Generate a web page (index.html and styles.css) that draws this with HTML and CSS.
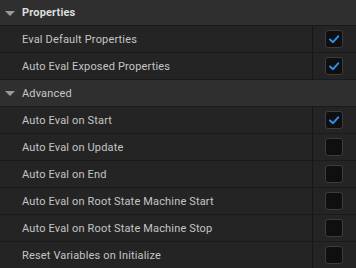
FILE: index.html
```html
<!DOCTYPE html>
<html>
<head>
<meta charset="utf-8">
<link rel="stylesheet" href="styles.css">
</head>
<body>
<div class="panel">
  <div class="header first">
    <span class="arrow"></span>
    <span class="htext">Properties</span>
  </div>
  <div class="row">
    <div class="label">Eval Default Properties</div>
    <div class="value"><span class="cb on"><svg viewBox="0 0 18 18" width="18" height="18"><path d="M5 9.5 L8 12.2 L13.2 6.3" fill="none" stroke="#2b8fec" stroke-width="2" stroke-linecap="round" stroke-linejoin="round"/></svg></span></div>
  </div>
  <div class="row">
    <div class="label">Auto Eval Exposed Properties</div>
    <div class="value"><span class="cb on"><svg viewBox="0 0 18 18" width="18" height="18"><path d="M5 9.5 L8 12.2 L13.2 6.3" fill="none" stroke="#2b8fec" stroke-width="2" stroke-linecap="round" stroke-linejoin="round"/></svg></span></div>
  </div>
  <div class="header">
    <span class="arrow"></span>
    <span class="htext light">Advanced</span>
  </div>
  <div class="row">
    <div class="label">Auto Eval on Start</div>
    <div class="value"><span class="cb on"><svg viewBox="0 0 18 18" width="18" height="18"><path d="M5 9.5 L8 12.2 L13.2 6.3" fill="none" stroke="#2b8fec" stroke-width="2" stroke-linecap="round" stroke-linejoin="round"/></svg></span></div>
  </div>
  <div class="row">
    <div class="label">Auto Eval on Update</div>
    <div class="value"><span class="cb"></span></div>
  </div>
  <div class="row">
    <div class="label">Auto Eval on End</div>
    <div class="value"><span class="cb"></span></div>
  </div>
  <div class="row">
    <div class="label">Auto Eval on Root State Machine Start</div>
    <div class="value"><span class="cb"></span></div>
  </div>
  <div class="row">
    <div class="label">Auto Eval on Root State Machine Stop</div>
    <div class="value"><span class="cb"></span></div>
  </div>
  <div class="row last">
    <div class="label">Reset Variables on Initialize</div>
    <div class="value"><span class="cb"></span></div>
  </div>
</div>
</body>
</html>
```
FILE: styles.css
```css
html, body {
  margin: 0;
  padding: 0;
  background: #242424;
}
.panel {
  width: 356px;
  height: 268px;
  overflow: hidden;
  font-family: Roboto, "Open Sans", sans-serif;
  font-size: 11px;
  letter-spacing: 0.16px;
  display: flex;
  flex-direction: column;
}
.header {
  height: 26px;
  flex: none;
  background: #2f2f2f;
  border-bottom: 1px solid #1a1a1a;
  display: flex;
  align-items: center;
  gap: 7px;
  padding-left: 5px;
  box-sizing: content-box;
}
.header.first {
  height: 25px;
}
.arrow {
  width: 0;
  height: 0;
  border-left: 5px solid transparent;
  border-right: 5px solid transparent;
  border-top: 5px solid #9a9a9a;
  margin-top: 1px;
}
.htext {
  color: #dedede;
  font-weight: 700;
}
.htext.light {
  font-weight: 400;
  color: #c8c8c8;
}
.row {
  height: 26px;
  flex: none;
  display: flex;
  background: #242424;
  border-bottom: 1px solid #1a1a1a;
}
.row.last {
  border-bottom: none;
}
.label {
  width: 290px;
  padding-left: 22px;
  display: flex;
  align-items: center;
  color: #c4c4c4;
  border-right: 1px solid #161616;
  white-space: nowrap;
}
.value {
  flex: 1;
  display: flex;
  align-items: center;
  padding-left: 12px;
}
.cb {
  width: 16px;
  height: 16px;
  background: #0f0f0f;
  border: 1px solid #3c3c3c;
  border-radius: 3px;
  display: flex;
  align-items: center;
  justify-content: center;
  overflow: hidden;
}
.cb svg {
  display: block;
  flex: none;
}
```
